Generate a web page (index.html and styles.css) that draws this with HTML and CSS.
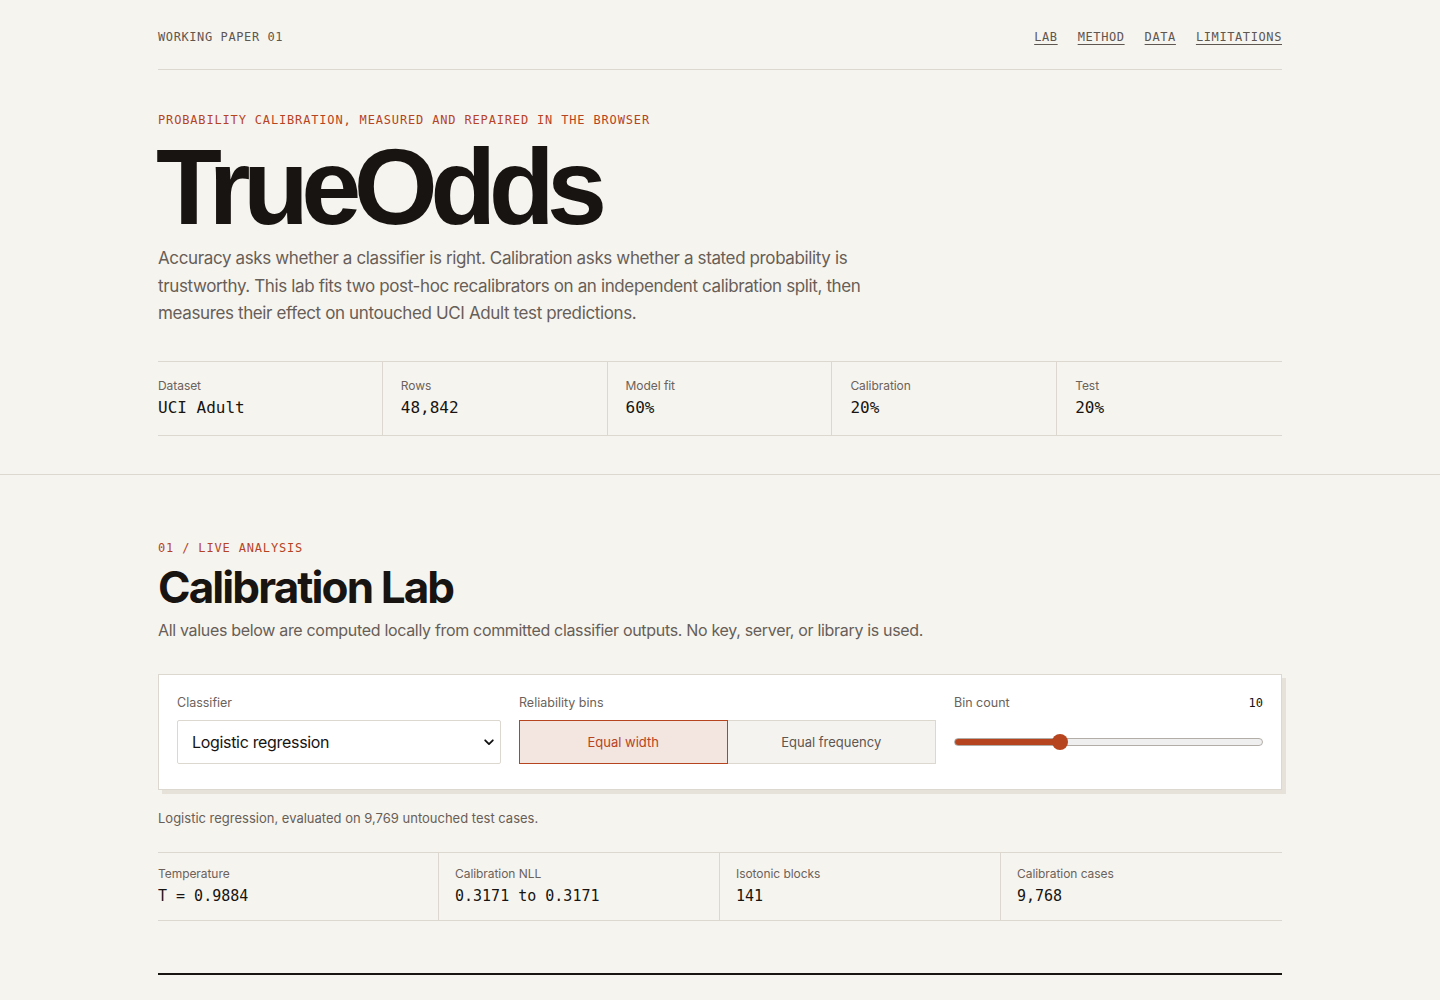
FILE: index.html
```html
<!DOCTYPE html>
<html lang="en">
<head>
<meta charset="utf-8">
<title>TrueOdds — Working Paper 01</title>
<link rel="stylesheet" href="styles.css">
</head>
<body>
<header class="site-header">
  <div class="wrap header-inner">
    <div class="paper-tag">WORKING PAPER 01</div>
    <nav class="nav">
      <a href="#lab">LAB</a>
      <a href="#method">METHOD</a>
      <a href="#data">DATA</a>
      <a href="#limitations">LIMITATIONS</a>
    </nav>
  </div>
</header>

<section class="hero">
  <div class="wrap">
    <p class="eyebrow">PROBABILITY CALIBRATION, MEASURED AND REPAIRED IN THE BROWSER</p>
    <h1 class="title">TrueOdds</h1>
    <p class="lede">Accuracy asks whether a classifier is right. Calibration asks whether a stated probability is trustworthy. This lab fits two post-hoc recalibrators on an independent calibration split, then measures their effect on untouched UCI Adult test predictions.</p>
    <dl class="facts facts-5">
      <div class="fact"><dt>Dataset</dt><dd>UCI Adult</dd></div>
      <div class="fact"><dt>Rows</dt><dd>48,842</dd></div>
      <div class="fact"><dt>Model fit</dt><dd>60%</dd></div>
      <div class="fact"><dt>Calibration</dt><dd>20%</dd></div>
      <div class="fact"><dt>Test</dt><dd>20%</dd></div>
    </dl>
  </div>
</section>

<section class="lab" id="lab">
  <div class="wrap">
    <p class="eyebrow">01 / LIVE ANALYSIS</p>
    <h2 class="section-title">Calibration Lab</h2>
    <p class="section-desc">All values below are computed locally from committed classifier outputs. No key, server, or library is used.</p>

    <div class="panel">
      <div class="control">
        <label class="control-label" for="clf">Classifier</label>
        <div class="select-wrap">
          <select id="clf" class="select">
            <option>Logistic regression</option>
            <option>Gradient boosting</option>
            <option>Naive Bayes</option>
          </select>
          <svg class="chev" width="10" height="7" viewBox="0 0 10 7" aria-hidden="true"><path d="M1.2 1.3 L5 5.1 L8.8 1.3" fill="none" stroke="#111" stroke-width="1.8" stroke-linecap="round" stroke-linejoin="round"/></svg>
        </div>
      </div>
      <div class="control">
        <span class="control-label">Reliability bins</span>
        <div class="toggle">
          <button class="toggle-btn is-active" type="button">Equal width</button>
          <button class="toggle-btn" type="button">Equal frequency</button>
        </div>
      </div>
      <div class="control">
        <div class="control-head">
          <label class="control-label" for="bins">Bin count</label>
          <span class="bin-value">10</span>
        </div>
        <div class="range-wrap">
          <input id="bins" class="range" type="range" min="5" max="20" value="10" style="--fill: 33.3%">
        </div>
      </div>
    </div>

    <p class="note">Logistic regression, evaluated on 9,769 untouched test cases.</p>

    <dl class="facts facts-4">
      <div class="fact"><dt>Temperature</dt><dd>T = 0.9884</dd></div>
      <div class="fact"><dt>Calibration NLL</dt><dd>0.3171 to 0.3171</dd></div>
      <div class="fact"><dt>Isotonic blocks</dt><dd>141</dd></div>
      <div class="fact"><dt>Calibration cases</dt><dd>9,768</dd></div>
    </dl>

    <div class="rule"></div>
  </div>
</section>
</body>
</html>
```

FILE: styles.css
```css
* { box-sizing: border-box; }

html, body {
  margin: 0;
  padding: 0;
  background: #f6f4ef;
  color: #171411;
  font-family: Inter, "Noto Sans", sans-serif;
}

.wrap {
  width: 1124px;
  margin: 0 auto;
}

/* header */
.header-inner {
  display: flex;
  justify-content: space-between;
  align-items: center;
  height: 70px;
  border-bottom: 1px solid #dcd7cf;
  padding-top: 4px;
}
.paper-tag,
.nav a {
  font-family: "DejaVu Sans Mono", "Liberation Mono", monospace;
  font-size: 12px;
  letter-spacing: 0.05em;
  color: #5e5650;
}
.nav {
  display: flex;
  gap: 20px;
}
.nav a {
  text-decoration: underline;
  text-underline-offset: 3px;
  text-decoration-thickness: 1px;
}

/* hero */
.hero {
  border-bottom: 1px solid #dcd7cf;
  padding: 42px 0 38px;
}
.eyebrow {
  margin: 0;
  font-family: "DejaVu Sans Mono", "Liberation Mono", monospace;
  font-size: 12px;
  line-height: 16px;
  letter-spacing: 0.07em;
  color: #b5441f;
}
.title {
  margin: -2px 0 0 -2px;
  font-family: "Liberation Sans", Arial, sans-serif;
  font-weight: 700;
  font-size: 108px;
  line-height: 121px;
  letter-spacing: -0.07em;
  color: #171411;
}
.lede {
  margin: -2px 0 0;
  max-width: 720px;
  font-size: 17px;
  line-height: 27.5px;
  color: #675e57;
  letter-spacing: -0.022em;
}

/* facts */
.facts {
  margin: 33px 0 0;
  display: grid;
  border-top: 1px solid #dcd7cf;
  border-bottom: 1px solid #dcd7cf;
}
.facts-5 { grid-template-columns: repeat(5, 1fr); }
.facts-4 { grid-template-columns: repeat(4, 1fr); margin-top: 24px; }
.fact {
  padding: 16px 18px 17px;
  border-right: 1px solid #dcd7cf;
}
.fact:last-child { border-right: none; }
.fact:first-child { padding-left: 0; }
.facts-4 .fact { padding: 13px 16px 14px; }
.facts-4 .fact:first-child { padding-left: 0; }
.fact dt {
  font-size: 12px;
  line-height: 16px;
  color: #6b625b;
  letter-spacing: -0.005em;
}
.fact dd {
  margin: 4px 0 0;
  font-family: "DejaVu Sans Mono", "Liberation Mono", monospace;
  font-size: 16px;
  line-height: 20px;
  color: #171411;
}
.facts-4 .fact dd { font-size: 15px; }

/* lab */
.lab {
  padding-top: 65px;
}
.section-title {
  margin: 5px 0 0;
  font-size: 44px;
  line-height: 52px;
  font-weight: 700;
  letter-spacing: -0.043em;
  color: #171411;
}
.section-desc {
  margin: 5px 0 0;
  font-size: 16px;
  line-height: 24px;
  color: #675e57;
  letter-spacing: -0.02em;
}

.panel {
  margin-top: 32px;
  background: #fff;
  border: 1px solid #dcd7cf;
  box-shadow: 4px 4px 0 #e7e2d9;
  padding: 18px 18px 25px;
  display: grid;
  grid-template-columns: 324fr 417fr 309fr;
  gap: 18px;
}
.control {
  display: flex;
  flex-direction: column;
}
.control-label {
  font-size: 12.5px;
  line-height: 20px;
  color: #6b625b;
}
.control-head {
  display: flex;
  justify-content: space-between;
  align-items: center;
}
.bin-value {
  font-family: "DejaVu Sans Mono", "Liberation Mono", monospace;
  font-size: 12px;
  color: #171411;
}

.select-wrap {
  position: relative;
  margin-top: 7px;
}
.select {
  appearance: none;
  -webkit-appearance: none;
  width: 100%;
  height: 44px;
  border: 1px solid #dcd7cf;
  border-radius: 2px;
  background: #fff;
  padding: 0 30px 0 14px;
  font-family: Inter, "Noto Sans", sans-serif;
  font-size: 16px;
  letter-spacing: -0.02em;
  color: #171411;
}
.chev {
  position: absolute;
  right: 7px;
  top: 19px;
  pointer-events: none;
}

.toggle {
  margin-top: 7px;
  display: grid;
  grid-template-columns: 1fr 1fr;
}
.toggle-btn {
  height: 44px;
  border: 1px solid #dcd7cf;
  background: #f5f3ef;
  color: #5e5650;
  font-family: Inter, "Noto Sans", sans-serif;
  font-size: 13px;
  padding: 0;
}
.toggle-btn + .toggle-btn { border-left: none; }
.toggle-btn.is-active {
  background: #f3e5e0;
  border-color: #b5441f;
  color: #b5441f;
}

.range-wrap {
  margin-top: 7px;
  height: 44px;
  display: flex;
  align-items: center;
}
.range {
  -webkit-appearance: none;
  appearance: none;
  width: 100%;
  height: 8px;
  margin: 0;
  border-radius: 4px;
  border: 1px solid #b3ada7;
  background: linear-gradient(to right, #b5441f 0, #b5441f var(--fill), #efefef var(--fill), #efefef 100%);
}
.range::-webkit-slider-thumb {
  -webkit-appearance: none;
  appearance: none;
  width: 16px;
  height: 16px;
  border-radius: 50%;
  background: #b5441f;
  border: none;
}

.note {
  margin: 18px 0 0;
  font-size: 13px;
  line-height: 20px;
  color: #675e57;
}

.rule {
  margin-top: 52px;
  height: 2px;
  background: #171411;
}
```
